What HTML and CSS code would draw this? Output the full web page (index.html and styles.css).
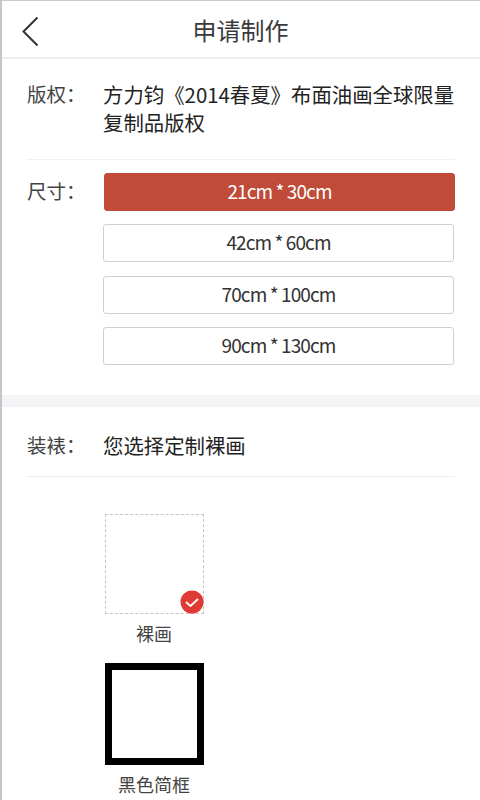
FILE: index.html
```html
<!DOCTYPE html>
<html>
<head>
<meta charset="utf-8" />
<title>申请制作</title>
<link rel="stylesheet" href="styles.css">
</head>
<body>
<div class="page">
  <div class="header">
    <svg class="back" width="24" height="32" viewBox="0 0 24 32">
      <path d="M16.5 1.5 L2.5 15.5 L16.5 29.5" fill="none" stroke="#333" stroke-width="2" />
    </svg>
    <h1>申请制作</h1>
  </div>
  <div class="section">
    <div class="row row_title">
      <span class="label">版权：</span>
      <div class="value">方力钧《2014春夏》布面油画全球限量复制品版权</div>
    </div>
    <div class="row row_size">
      <span class="label">尺寸：</span>
      <div class="sizes">
        <button class="size active">21cm * 30cm</button>
        <button class="size">42cm * 60cm</button>
        <button class="size">70cm * 100cm</button>
        <button class="size">90cm * 130cm</button>
      </div>
    </div>
  </div>
  <div class="band"></div>
  <div class="section">
    <div class="row row_frame">
      <span class="label">装裱：</span>
      <div class="value">您选择定制裸画</div>
    </div>
    <div class="frames">
      <div class="frame">
        <div class="preview bare">
          <svg class="check" width="24" height="24" viewBox="0 0 24 24">
            <circle cx="12" cy="12" r="11.5" fill="#e03a34" />
            <path d="M6 12 L10.5 16 L18 9" fill="none" stroke="#fff" stroke-width="1.8" />
          </svg>
        </div>
        <div class="name">裸画</div>
      </div>
      <div class="frame">
        <div class="preview black"></div>
        <div class="name">黑色简框</div>
      </div>
    </div>
  </div>
</div>
</body>
</html>
```

FILE: styles.css
```css
* {
  font-family: 'Noto Sans CJK SC', 'Noto Sans', sans-serif;
  box-sizing: border-box;
}
html, body {
  margin: 0;
  height: 800px;
  overflow: hidden;
}
.page {
  height: 800px;
  border-top: 1px solid #c9c9c9;
  border-left: 2px solid #c4c6ca;
  background-color: #fff;
  color: #333;
}
.header {
  height: 58px;
  border-bottom: 2px solid #eee;
  display: flex;
  align-items: center;
  justify-content: center;
  position: relative;
}
.header h1 {
  margin: 0 0 0 -1px;
  font-size: 24px;
  font-weight: normal;
  color: #3a3a3a;
}
.back {
  position: absolute;
  left: 19px;
  top: 15px;
}
.section {
  padding: 0 25px;
}
.row {
  display: flex;
}
.label {
  width: 76px;
  flex: none;
  font-size: 19.5px;
  line-height: 28px;
  color: #444;
}
.value {
  flex: 1;
  font-size: 20.4px;
  line-height: 28px;
  color: #222;
}
.row_title {
  padding: 21px 0 23px;
  border-bottom: 1px solid #f1f1f1;
}
.row_size {
  padding: 13px 0 30px;
}
.row_size .label {
  line-height: 36px;
}
.sizes {
  flex: 1;
  padding-right: 1px;
  display: flex;
  flex-direction: column;
  gap: 13.3px;
}
.size {
  height: 38px;
  padding: 0 0 3px;
  border: 1px solid #d0d0d0;
  border-radius: 3px;
  background-color: #fff;
  color: #333;
  font-size: 19px;
  letter-spacing: -0.9px;
}
.size.active {
  margin-left: 1px;
  margin-right: -1px;
  border-color: #c04b38;
  background-color: #c04b38;
  color: #fff;
}
.band {
  height: 12px;
  background-color: #f3f4f6;
}
.row_frame {
  padding: 24px 0 17px;
  border-bottom: 1px solid #eee;
}
.frames {
  padding: 37px 0 0 76px;
  display: flex;
  flex-direction: column;
  gap: 18px;
}
.frame {
  width: 102px;
  display: flex;
  flex-direction: column;
  align-items: center;
}
.preview {
  width: 99px;
  position: relative;
}
.preview.bare {
  height: 100px;
  border: 1px dashed #c4c4c4;
}
.preview.black {
  height: 102px;
  border: 7px solid #000;
}
.check {
  position: absolute;
  right: -1px;
  bottom: -1px;
}
.name {
  margin-top: 7px;
  font-size: 18px;
  line-height: 24px;
  color: #444;
}
```
